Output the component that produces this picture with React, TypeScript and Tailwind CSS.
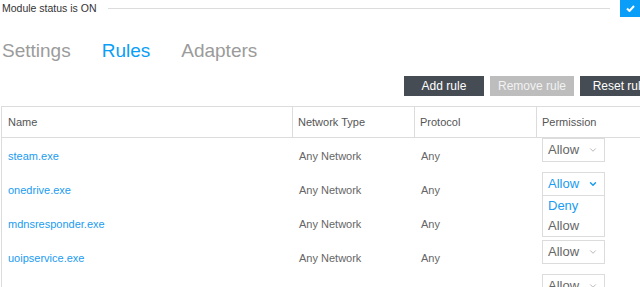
import { ChevronDown } from 'lucide-react'

const rules = [
  { name: 'steam.exe', open: false },
  { name: 'onedrive.exe', open: true },
  { name: 'mdnsresponder.exe', open: false },
  { name: 'uoipservice.exe', open: false },
]

function PermissionSelect({ open }: { open: boolean }) {
  return (
    <div className="relative w-[63px]">
      <div className="h-[24px] border border-[#dcdcdc] bg-white flex items-center justify-between pl-[5px] pr-[6px]">
        <span className={`text-[13px] ${open ? 'text-[#1a9cf0]' : 'text-[#666]'}`}>Allow</span>
        <ChevronDown
          className={`h-[10px] w-[10px] ${open ? 'text-[#1a9cf0]' : 'text-[#aaa]'}`}
          strokeWidth={open ? 3.5 : 2}
        />
      </div>
      {open && (
        <div className="absolute left-0 top-[23px] z-10 w-[63px] border border-[#dcdcdc] bg-white">
          <div className="h-[20px] pl-[5px] flex items-center text-[13px] text-[#1a9cf0]">Deny</div>
          <div className="h-[20px] pl-[5px] flex items-center text-[13px] text-[#666]">Allow</div>
        </div>
      )}
    </div>
  )
}

export default function App() {
  return (
    <div className="w-[640px] h-[287px] overflow-hidden bg-white" style={{ fontFamily: '"Liberation Sans", Arial, sans-serif' }}>
      {/* Status bar */}
      <div className="flex items-center h-[17px]">
        <span className="pl-[2px] text-[10.5px] text-[#333]">Module status is ON</span>
        <div className="flex-1 ml-[11px] mr-[10px] h-px bg-[#dcdcdc]" />
        <div className="w-[20px] h-[17px] bg-[#0a9ef8] flex items-center justify-center">
          <svg width="9" height="7" viewBox="0 0 9 7">
            <path d="M1 3.5 L3.5 6 L8 1" fill="none" stroke="white" strokeWidth="2" />
          </svg>
        </div>
      </div>

      {/* Tabs */}
      <div className="flex gap-[31px] mt-[22px] pl-[2px] text-[19px] leading-[24px]">
        <span className="text-[#9b9b9b]">Settings</span>
        <span className="text-[#0a9ef8]">Rules</span>
        <span className="text-[#9b9b9b]">Adapters</span>
      </div>

      {/* Actions */}
      <div className="flex justify-end gap-[6px] mt-[13px] mr-[-20px]">
        <button className="h-[20px] min-w-[80px] px-2 bg-[#454c53] text-white text-[12px]">Add rule</button>
        <button className="h-[20px] min-w-[80px] px-2 bg-[#bdbdbd] text-[#f2f2f2] text-[12px]">Remove rule</button>
        <button className="h-[20px] min-w-[80px] px-2 bg-[#454c53] text-white text-[12px]">Reset rule</button>
      </div>

      {/* Table */}
      <div className="mt-[10px] ml-[1px] w-[700px] border-l border-t border-[#dcdcdc] text-[11px]">
        <div className="flex h-[31px] border-b border-[#dcdcdc] text-[#555]">
          <div className="w-[291px] border-r border-[#dcdcdc] pl-[6px] flex items-center">Name</div>
          <div className="w-[122px] border-r border-[#dcdcdc] pl-[5px] flex items-center">Network Type</div>
          <div className="w-[122px] border-r border-[#dcdcdc] pl-[5px] flex items-center">Protocol</div>
          <div className="flex-1 pl-[5px] flex items-center">Permission</div>
        </div>
        {rules.map((r) => (
          <div key={r.name} className="flex h-[34px]">
            <div className="w-[291px] pl-[6px] pt-[2px] flex items-center text-[#1a9cf0]">{r.name}</div>
            <div className="w-[122px] pl-[6px] pt-[2px] flex items-center text-[#666]">Any Network</div>
            <div className="w-[122px] pl-[6px] pt-[2px] flex items-center text-[#666]">Any</div>
            <div className="flex-1 pl-[5px]">
              <PermissionSelect open={r.open} />
            </div>
          </div>
        ))}
        {/* next row, only its select shows above the fold */}
        <div className="flex h-[34px]">
          <div className="w-[535px]" />
          <div className="flex-1 pl-[5px]">
            <PermissionSelect open={false} />
          </div>
        </div>
      </div>
    </div>
  )
}
